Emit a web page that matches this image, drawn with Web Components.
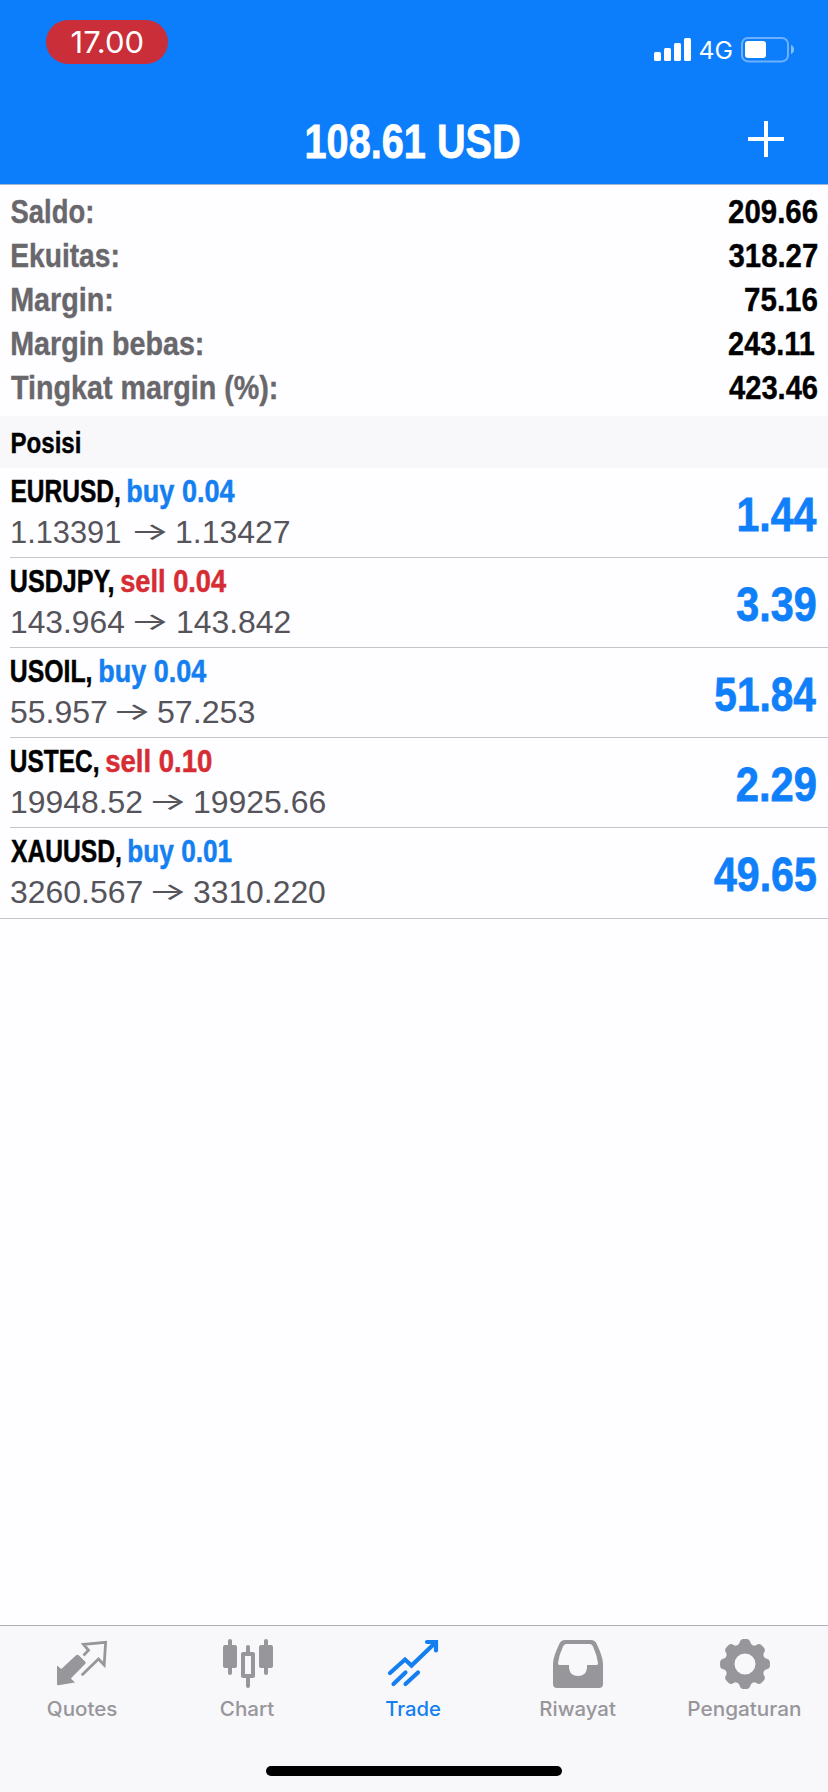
<!DOCTYPE html>
<html lang="id">
<head>
<meta charset="utf-8">
<title>Trade</title>
<style>
html,body{margin:0;padding:0;background:#fefdff}
body{font-family:"Liberation Sans",Arial,sans-serif}
</style>
</head>
<body>
<trade-app>
  <status-bar slot="top"><fit-text w="70.5">17.00</fit-text><fit-text slot="net" w="31.5">4G</fit-text></status-bar>
  <nav-header slot="top"><fit-text w="212.3">108.61 USD</fit-text></nav-header>

  <summary-row slot="summary"><fit-text w="81">Saldo:</fit-text><fit-text slot="value" w="88.3">209.66</fit-text></summary-row>
  <summary-row slot="summary"><fit-text start=".5" w="105.5">Ekuitas:</fit-text><fit-text slot="value" w="88">318.27</fit-text></summary-row>
  <summary-row slot="summary"><fit-text start=".5" w="99.5">Margin:</fit-text><fit-text slot="value" w="72.2">75.16</fit-text></summary-row>
  <summary-row slot="summary"><fit-text start=".5" w="190">Margin bebas:</fit-text><fit-text slot="value" w="85" end="3.3">243.11</fit-text></summary-row>
  <summary-row slot="summary"><fit-text w="265">Tingkat margin (%):</fit-text><fit-text slot="value" w="88.3">423.46</fit-text></summary-row>

  <section-title><fit-text start=".5" w="68">Posisi</fit-text></section-title>

  <position-row side="buy">
    <fit-text slot="symbol" start=".5" w="107.3">EURUSD,</fit-text><fit-text slot="order" start="9.2" w="106.7">buy 0.04</fit-text>
    <fit-text slot="open" start="1.3" w="108">1.13391</fit-text><fit-text slot="close" start="12" w="112.3">1.13427</fit-text>
    <fit-text slot="profit" w="77.5">1.44</fit-text>
    <fit-text slot="arrow" start="14.5" w="30.7">→</fit-text>
  </position-row>
  <position-row side="sell">
    <fit-text slot="symbol" w="102">USDJPY,</fit-text><fit-text slot="order" start="7.8" w="105.3">sell 0.04</fit-text>
    <fit-text slot="open" start="1.3" w="112">143.964</fit-text><fit-text slot="close" start="12" w="112">143.842</fit-text>
    <fit-text slot="profit" w="78.6">3.39</fit-text>
    <fit-text slot="arrow" start="10.7" w="30.7">→</fit-text>
  </position-row>
  <position-row side="buy">
    <fit-text slot="symbol" w="80">USOIL,</fit-text><fit-text slot="order" start="8.8" w="106.3">buy 0.04</fit-text>
    <fit-text slot="open" w="95.5">55.957</fit-text><fit-text slot="close" start="10.8" w="96">57.253</fit-text>
    <fit-text slot="profit" w="101">51.84</fit-text>
    <fit-text slot="arrow" start="10.5" w="30.7">→</fit-text>
  </position-row>
  <position-row side="sell">
    <fit-text slot="symbol" w="87">USTEC,</fit-text><fit-text slot="order" start="8" w="105.3">sell 0.10</fit-text>
    <fit-text slot="open" start="1.3" w="129.7">19948.52</fit-text><fit-text slot="close" start="12" w="130">19925.66</fit-text>
    <fit-text slot="profit" w="78.8">2.29</fit-text>
    <fit-text slot="arrow" start="11" w="30.5">→</fit-text>
  </position-row>
  <position-row side="buy" last>
    <fit-text slot="symbol" w="109.3">XAUUSD,</fit-text><fit-text slot="order" start="9" w="102.5">buy 0.01</fit-text>
    <fit-text slot="open" w="131">3260.567</fit-text><fit-text slot="close" start="10.7" w="131">3310.220</fit-text>
    <fit-text slot="profit" w="101.7">49.65</fit-text>
    <fit-text slot="arrow" start="11" w="30.5">→</fit-text>
  </position-row>

  <tab-bar slot="bottom">
    <tab-item icon="quotes"><fit-text w="68.5">Quotes</fit-text></tab-item>
    <tab-item icon="chart"><fit-text w="53">Chart</fit-text></tab-item>
    <tab-item icon="trade" active><fit-text w="54">Trade</fit-text></tab-item>
    <tab-item icon="history"><fit-text w="74.5">Riwayat</fit-text></tab-item>
    <tab-item icon="settings"><fit-text w="111">Pengaturan</fit-text></tab-item>
  </tab-bar>
</trade-app>

<script>
const define = (name, html, ready) => customElements.define(name, class extends HTMLElement {
  constructor() {
    super();
    this.attachShadow({ mode: 'open' }).innerHTML = html;
  }
  connectedCallback() { if (ready) ready(this, this.shadowRoot); }
});

define('trade-app', `
<style>
:host{display:flex;flex-direction:column;width:828px;height:1792px;overflow:hidden;background:#fefdff}
.summary{padding:4px 11px 7px}
main{flex:1}
</style>
<slot name="top"></slot>
<main><div class="summary"><slot name="summary"></slot></div><slot></slot></main>
<slot name="bottom"></slot>`);

define('status-bar', `
<style>
:host{display:flex;justify-content:space-between;align-items:flex-start;box-sizing:border-box;height:96px;padding:20px 33px 0 46px;background:#0c7efb;color:#fff;font-family:Inter,sans-serif}
.time{display:flex;justify-content:center;width:122px;height:44px;border-radius:22px;background:#ca2e39;font-size:29.5px;line-height:44px}
.right{display:flex;align-items:flex-start;padding-top:17px}
.net{margin:0 10px 0 9px;font-size:24px;line-height:27px}
svg{display:block}
</style>
<div class="time"><slot></slot></div>
<div class="right">
  <svg width="37" height="25" fill="#fff"><rect y="15" width="7" height="9" rx="1.6"/><rect x="10" y="11" width="7" height="13" rx="1.6"/><rect x="20" y="6" width="7" height="18" rx="1.6"/><rect x="30" y="1" width="7" height="23" rx="1.6"/></svg>
  <div class="net"><slot name="net"></slot></div>
  <svg width="54" height="26"><rect x="1" y="1" width="46" height="23.4" rx="6" fill="none" stroke="#fff" stroke-opacity=".4" stroke-width="2"/><rect x="4" y="4" width="21" height="17" rx="3" fill="#fff"/><path d="M50 8c4 1 4 8 0 9z" fill="#fff" fill-opacity=".5"/></svg>
</div>`);

define('nav-header', `
<style>
:host{display:grid;grid-template-columns:307px 1fr 80px;box-sizing:border-box;height:89px;border-bottom:1px solid #9cb6dc;background:#0c7efb;color:#fff}
.title{grid-column:2;padding-top:3px;font-size:48px;font-weight:700;line-height:85px;-webkit-text-stroke:.8px}
svg{display:block;margin-top:25px}
</style>
<div class="title"><slot></slot></div>
<svg width="36" height="36" stroke="#fff" stroke-width="4"><path d="M18 0v36M0 18h36"/></svg>`);

define('summary-row', `
<style>
:host{display:flex;justify-content:space-between;height:44px;font-size:34px;font-weight:700;line-height:44px;color:#68676b;-webkit-text-stroke:.4px}
.v{color:#000}
</style>
<slot></slot><div class="v"><slot name="value"></slot></div>`);

define('section-title', `
<style>
:host{display:block;box-sizing:border-box;height:52px;padding:1px 11px 0;background:#f8f7fa;color:#000;font-size:30px;font-weight:700;line-height:51px;-webkit-text-stroke:.4px}
</style><slot></slot>`);

define('position-row', `
<style>
:host{display:flex;justify-content:space-between;box-sizing:border-box;height:90px;margin-left:10px;padding:0 12px 0 1px;border-bottom:1px solid #c5c4c8}
:host([last]){height:91px;margin-left:0;padding-left:11px}
:host([side=buy]){--side:#147ff0}
:host([side=sell]){--side:#d62d34}
.line{display:flex;height:40px;font-size:32px;line-height:40px}
.name{padding-top:3px;font-weight:700;color:#000;-webkit-text-stroke:.5px}
.order{color:var(--side)}
.price{padding-top:1px;color:#55545a}
.arrow{font-family:Inter,sans-serif;font-size:24px;font-weight:400}
.profit{padding-top:4px;font-size:48px;font-weight:700;line-height:85px;color:#0f7ffa;-webkit-text-stroke:.8px}
</style>
<div>
  <div class="line name"><slot name="symbol"></slot><div class="order"><slot name="order"></slot></div></div>
  <div class="line price"><slot name="open"></slot><div class="arrow"><slot name="arrow"></slot></div><slot name="close"></slot></div>
</div>
<div class="profit"><slot name="profit"></slot></div>`);

define('tab-bar', `
<style>
:host{display:flex;flex-direction:column;align-items:center;box-sizing:border-box;height:167px;border-top:1px solid #b0afb3;background:#f8f7fa}
.tabs{display:grid;grid-template-columns:repeat(5,1fr);width:100%;height:140px}
.home{width:296px;height:10px;border-radius:5px;background:#000}
</style>
<div class="tabs"><slot></slot></div><div class="home"></div>`);

const ICONS = {
  quotes: '<path d="M22.300 16.700 28.300 22.700Q29.300 23.700 28.300 24.700L13.800 39.500 18 43.500 1.500 46.300Q0 46.500 0 45V26.500L4.300 30 18.500 16.700Q20.500 15 22.300 16.700Z" fill="currentColor"/><path d="M26.500 16.500 31.500 11.300 26.500 5.300 48.600 3.400 47.200 26 41.500 20 24.700 36.300" fill="none" stroke="currentColor" stroke-width="2.800"/>',
  chart: '<g fill="currentColor"><rect y="6" width="14" height="23" rx="2"/><rect x="5" width="4" height="36" rx="2"/><rect x="36" y="6" width="14" height="23" rx="2"/><rect x="41" width="4" height="36" rx="2"/><rect x="23" y="6" width="4" height="9" rx="2"/><rect x="23" y="36" width="4" height="13" rx="2"/><path fill-rule="evenodd" d="M20 13h10q2 0 2 2v22q0 2-2 2H20q-2 0-2-2V15q0-2 2-2zM22 17v18h6V17z"/></g>',
  trade: '<g fill="none" stroke="currentColor" stroke-width="4.200" stroke-linecap="round"><path d="M2 34 17 20.500 23.500 26.500 46.500 4.500"/><path d="M39 3H48V11.500"/><path d="M5.500 45 17.500 33.500M17.500 45 30 33.500"/></g>',
  history: '<path fill="currentColor" fill-rule="evenodd" d="M12 1H38Q42 1 43.500 4.500Q50 18 50 25V45Q50 49 46 49H4Q0 49 0 45V25Q0 18 6.500 4.500Q8 1 12 1ZM13 5Q11 5 10 7.500Q6 16 5 24Q5 26 6.500 26H16V29Q17 37 25 37Q33 37 34 29V26H43.500Q45.500 26 45 24Q44 16 40 7.500Q39 5 37 5Z"/>',
  settings: ''
};
/* Eight-toothed gear, one tooth every 45 degrees. */
(() => {
  const p = [];
  for (let i = 0; i < 8; i++) {
    const a = i * 45;
    const at = (r, d) => { const t = (a + d - 90) * Math.PI / 180; return (25 + r * Math.cos(t)).toFixed(2) + ' ' + (25 + r * Math.sin(t)).toFixed(2); };
    p.push((i ? 'L' : 'M') + at(20.8, -17) + 'L' + at(24, -11) + 'Q' + at(25, -8) + ' ' + at(25, -5) + 'L' + at(25, 5) + 'Q' + at(25, 8) + ' ' + at(24, 11) + 'L' + at(20.8, 17) + 'Q' + at(19.8, 22.5) + ' ' + at(20.8, 28));
  }
  ICONS.settings = '<path fill="currentColor" fill-rule="evenodd" d="' + p.join('') + 'ZM25 14.500A10.500 10.500 0 1 0 25 35.500A10.500 10.500 0 1 0 25 14.500Z"/>';
})();

define('tab-item', `
<style>
:host{display:flex;flex-direction:column;align-items:center;padding:13px 1px 0 0;color:#97969a;font-family:Inter,sans-serif;font-size:20px;font-weight:500;line-height:28px}
:host([icon=trade]),:host([icon=history]){padding-right:2.4px}
:host([active]){color:#147ff0}
svg{display:block;width:50px;height:50px;margin-bottom:6px;overflow:visible}
</style>
<svg viewBox="0 0 50 50"></svg><slot></slot>`, (el, root) => {
  root.querySelector('svg').innerHTML = ICONS[el.getAttribute('icon')];
});

/* Single line of text condensed or widened so that its ink fills exactly `w` pixels. */
const pen = document.createElement('canvas').getContext('2d');
define('fit-text', `
<style>
:host{display:block;flex:none;white-space:nowrap}
span{display:block;width:max-content;transform-origin:0 50%}
</style><span><slot></slot></span>`, (el, root) => {
  const w = +el.getAttribute('w');
  const s = getComputedStyle(el);
  /* Measured at ten times the size: the bounding box comes in whole pixels. */
  pen.font = s.fontWeight + ' ' + parseFloat(s.fontSize) * 10 + 'px ' + s.fontFamily;
  const m = pen.measureText(el.textContent);
  const left = m.actualBoundingBoxLeft / 10;
  const k = w / (left + m.actualBoundingBoxRight / 10);
  el.style.width = w + 'px';
  el.style.marginLeft = (el.getAttribute('start') || 0) + 'px';
  el.style.marginRight = (el.getAttribute('end') || 0) + 'px';
  root.querySelector('span').style.transform = 'translateX(' + left * k + 'px) scaleX(' + k + ')';
});
</script>
</body>
</html>
